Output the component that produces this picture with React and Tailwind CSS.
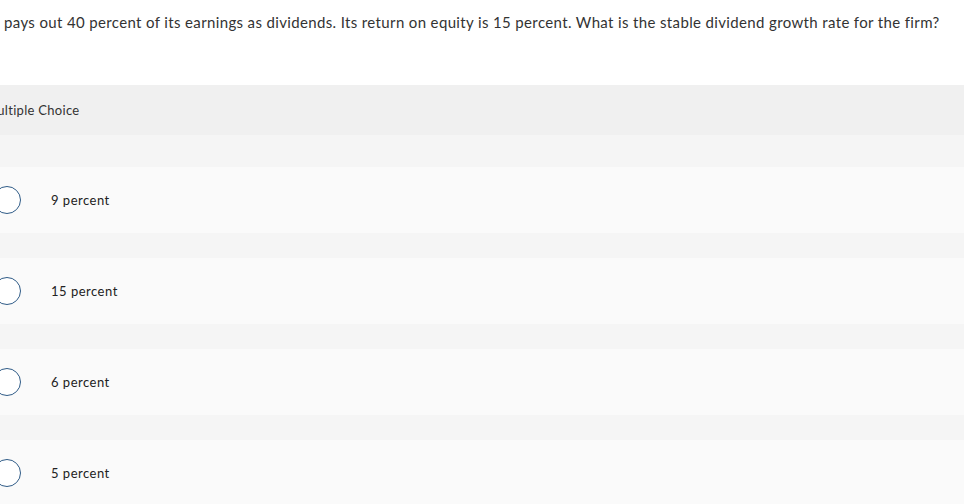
import React from 'react';

const options = ['9 percent', '15 percent', '6 percent', '5 percent'];

const App = () => {
  return (
    <div className="w-[964px] h-[504px] overflow-hidden bg-white text-[#333] font-['Lato',sans-serif]">
      {/* Question */}
      <div className="h-[85px] pl-[4px] pt-[10px]">
        <p className="text-[15px] leading-[24px] tracking-[0.36px] whitespace-nowrap">
          pays out 40 percent of its earnings as dividends. Its return on equity is 15 percent. What is the stable dividend growth rate for the firm?
        </p>
      </div>

      {/* Header */}
      <div className="h-[50px] bg-[#f0f0f0] flex items-center pt-[1px]">
        <span className="-ml-[15px] text-[13px] tracking-[0.3px] whitespace-nowrap">Multiple Choice</span>
      </div>

      {/* Options */}
      <div className="bg-[#f5f5f5] pt-[32px] flex flex-col gap-[25px]">
        {options.map((opt) => (
          <label key={opt} className="h-[66px] shrink-0 bg-[#fafafa] flex items-center">
            <span className="-ml-[7px] w-[28px] h-[28px] rounded-full border-[1.5px] border-[#2f5b87] bg-white shrink-0" />
            <span className="ml-[30px] pt-[2px] text-[13px] tracking-[0.5px] text-[#222]">{opt}</span>
          </label>
        ))}
      </div>
    </div>
  );
};

export default App;
